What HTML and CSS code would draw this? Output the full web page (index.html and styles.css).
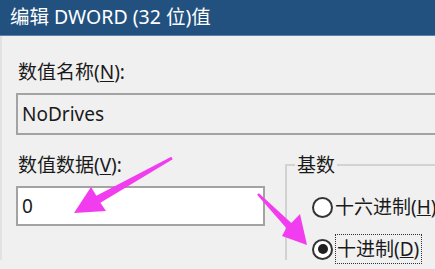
FILE: index.html
```html
<!DOCTYPE html>
<html lang="zh-CN">
<head>
    <meta charset="UTF-8">
    <meta name="viewport" content="width=device-width, initial-scale=1.0">
    <title>编辑 DWORD (32 位)值</title>
    <link rel="stylesheet" href="styles.css">
</head>
<body>
    <div class="titlebar">编辑 DWORD (32 位)值</div>

    <div class="dialog">
        <div class="field-label">数值名称(<u>N</u>):</div>
        <div class="name-input">NoDrives</div>

        <div class="row">
            <div class="data-col">
                <div class="field-label">数值数据(<u>V</u>):</div>
                <div class="data-input">0</div>
            </div>

            <fieldset class="base-group">
                <legend>基数</legend>
                <div class="radio-row">
                    <span class="radio"></span>
                    <span class="radio-text">十六进制(<u>H</u>)</span>
                </div>
                <div class="radio-row">
                    <span class="radio checked"></span>
                    <span class="radio-text focused">十进制(<u>D</u>)</span>
                </div>
            </fieldset>
        </div>
    </div>

    <!-- annotation arrows drawn over the dialog -->
    <svg class="arrows" width="435" height="269" viewBox="0 0 435 269">
        <polygon points="171.3,156.7 96.4,195.8 91,187 74,213 106,211 100.4,202.8 172.7,159.3" />
        <polygon points="258.9,193.2 291.3,223 300,214 307,245 282,236 286.3,227.9 257.1,194.8" />
    </svg>
</body>
</html>
```

FILE: styles.css
```css
body {
    margin: 0;
    width: 435px;
    height: 269px;
    overflow: hidden;
    position: relative;
    background-color: #f0f0f0;
    font-family: "Noto Sans", "Noto Sans CJK SC", sans-serif;
    color: #1a1a1a;
}
.titlebar {
    height: 35px;
    line-height: 33px;
    padding-left: 10px;
    background-color: #22517f;
    border-bottom: 1px solid #5a82aa;
    color: white;
    font-size: 19.5px;
}
.dialog {
    padding: 24px 0 0 16px;
    border-left: 2px solid #e2e2e2;
}
.field-label {
    font-size: 19px;
    line-height: 24px;
    margin-bottom: 9px;
}
.field-label u {
    text-underline-offset: 2px;
}
.name-input {
    box-sizing: border-box;
    width: 440px;
    height: 42px;
    margin-left: -2px;
    padding-left: 4px;
    border: 2px solid #a3a3a3;
    border-right: none;
    background-color: #f0f0f0;
    font-size: 19px;
    line-height: 38px;
}
.row {
    display: flex;
    align-items: flex-start;
    margin-top: 18px;
}
.data-col {
    flex-shrink: 0;
    width: 249px;
    margin-left: -2px;
}
.data-col .field-label {
    margin-left: 2px;
}
.data-input {
    box-sizing: border-box;
    height: 40px;
    padding-left: 4px;
    border: 2px solid #a3a3a3;
    background-color: white;
    font-size: 19px;
    line-height: 36px;
}
.base-group {
    flex-shrink: 0;
    margin: 0 0 0 20px;
    padding: 15px 0 0 0;
    width: 165px;
    height: 90px;
    border: 2px solid #d2d2d2;
    border-right: none;
    border-bottom: none;
}
.base-group legend {
    margin-left: 8px;
    padding: 0 2px;
    font-size: 19px;
    line-height: 24px;
}
.radio-row {
    display: flex;
    align-items: center;
    height: 30px;
    margin-bottom: 12px;
    padding-left: 25px;
    font-size: 19px;
    white-space: nowrap;
}
.radio {
    box-sizing: border-box;
    flex-shrink: 0;
    width: 21px;
    height: 21px;
    border: 2px solid #333;
    border-radius: 50%;
    background-color: white;
    display: flex;
    align-items: center;
    justify-content: center;
}
.radio.checked::after {
    content: "";
    width: 10px;
    height: 10px;
    border-radius: 50%;
    background-color: #1f1f1f;
}
.radio-text {
    margin-left: 2px;
    line-height: 28px;
}
.radio-text.focused {
    padding: 0 2px 0 1px;
    border: 1px dotted #333;
}
.arrows {
    position: absolute;
    top: 0;
    left: 0;
    pointer-events: none;
}
.arrows polygon {
    fill: #f23cf0;
}
```
